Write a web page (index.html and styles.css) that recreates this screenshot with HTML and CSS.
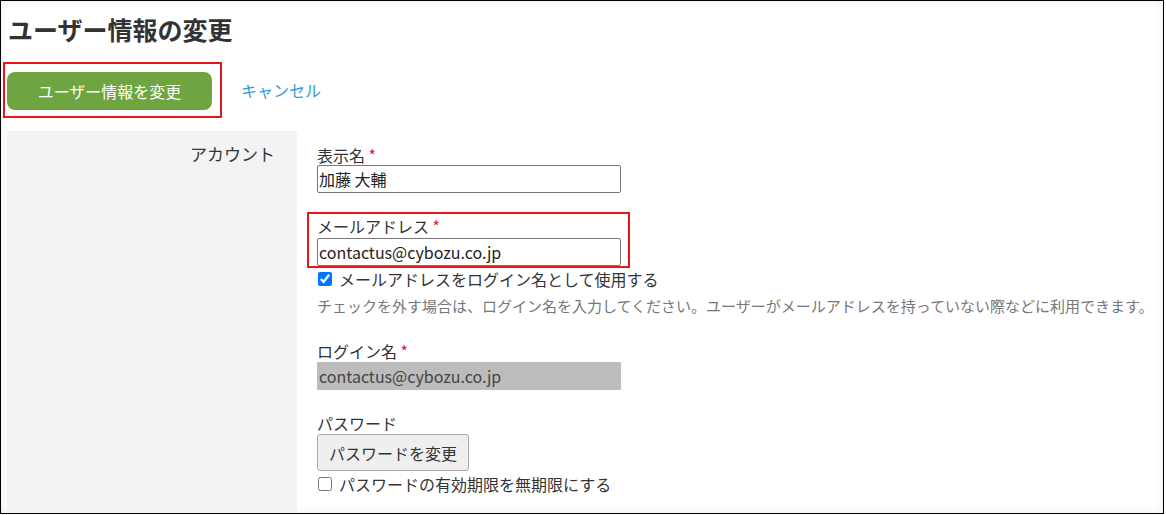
FILE: index.html
```html
<!DOCTYPE html>
<html lang="ja">
<head>
    <meta charset="UTF-8">
    <meta name="viewport" content="width=device-width, initial-scale=1.0">
    <title>ユーザー情報の変更</title>
    <link rel="stylesheet" href="styles.css">
</head>
<body>
<div class="frame">
    <h1 class="page-title">ユーザー情報の変更</h1>

    <div class="actions">
        <div class="highlight highlight-submit">
            <button class="btn-primary" type="button">ユーザー情報を変更</button>
        </div>
        <a class="cancel-link" href="#">キャンセル</a>
    </div>

    <div class="settings">
        <div class="settings-label">アカウント</div>
        <div class="settings-body">
            <div class="field">
                <label class="field-label">表示名 <span class="required">*</span></label>
                <input class="text-input" type="text" value="加藤 大輔">
            </div>

            <div class="highlight highlight-field">
                <label class="field-label">メールアドレス <span class="required">*</span></label>
                <input class="text-input" type="text" value="contactus@cybozu.co.jp">
            </div>

            <label class="check-row">
                <input type="checkbox" checked>
                <span>メールアドレスをログイン名として使用する</span>
            </label>
            <p class="help">チェックを外す場合は、ログイン名を入力してください。ユーザーがメールアドレスを持っていない際などに利用できます。</p>

            <div class="field field-login">
                <label class="field-label">ログイン名 <span class="required">*</span></label>
                <div class="readonly-box">contactus@cybozu.co.jp</div>
            </div>

            <div class="field field-password">
                <label class="field-label">パスワード</label>
                <button class="btn-secondary" type="button">パスワードを変更</button>
            </div>

            <label class="check-row check-row-last">
                <input type="checkbox">
                <span>パスワードの有効期限を無期限にする</span>
            </label>
        </div>
    </div>
</div>
</body>
</html>
```

FILE: styles.css
```css
* {
    box-sizing: border-box;
}

body {
    margin: 0;
    font-family: "Noto Sans CJK JP", "Noto Sans", sans-serif;
    font-size: 16px;
    color: #333;
    background: #fff;
}

.frame {
    width: 1164px;
    height: 514px;
    border: 1px solid #000;
    padding: 10px 0 0 6px;
    overflow: hidden;
    display: flex;
    flex-direction: column;
    box-shadow: inset 0 0 8px rgba(0, 0, 0, 0.08);
}

.page-title {
    margin: 0 0 15px 1px;
    font-size: 25px;
    line-height: 36px;
    font-weight: bold;
    color: #333;
}

.actions {
    display: flex;
    align-items: center;
}

.highlight {
    border: 2px solid #e8161b;
}

.highlight-submit {
    margin-left: -4px;
    padding: 8px 8px 6px 2px;
}

.btn-primary {
    width: 205px;
    height: 38px;
    border: none;
    border-radius: 8px;
    background-color: #6ea540;
    color: #fff;
    font-family: inherit;
    font-size: 16px;
    font-weight: normal;
    cursor: pointer;
}

.cancel-link {
    margin-left: 19px;
    color: #3498db;
    text-decoration: none;
    font-size: 16px;
}

.settings {
    flex: 1;
    margin-top: 13px;
    display: flex;
}

.settings-label {
    width: 290px;
    background-color: #f3f3f3;
    padding: 13px 22px 0 0;
    text-align: right;
    font-size: 17px;
    line-height: 20px;
}

.settings-body {
    padding: 14px 0 0 20px;
    display: flex;
    flex-direction: column;
    align-items: flex-start;
}

.field {
    display: flex;
    flex-direction: column;
    align-items: flex-start;
}

.field-label {
    line-height: 20px;
    color: #333;
}

.required {
    color: #e8161b;
}

.text-input {
    width: 304px;
    height: 28px;
    margin: 0;
    padding: 0 1px;
    border: 1px solid #767676;
    border-radius: 2px;
    font-family: inherit;
    font-size: 16px;
    color: #222;
}

.highlight-field {
    margin: 19px 0 0 -10px;
    padding: 2px 7px 0 8px;
    display: flex;
    flex-direction: column;
    align-items: flex-start;
}

.highlight-field .field-label {
    margin-bottom: 2px;
}

.check-row {
    display: flex;
    align-items: center;
    line-height: 20px;
    margin-top: 1px;
}

.check-row input {
    width: 14px;
    height: 14px;
    margin: 0 7px 0 1px;
}

.help {
    margin: 7px 0 0;
    font-size: 15px;
    line-height: 20px;
    color: #777;
    white-space: nowrap;
}

.field-login {
    margin-top: 25px;
}

.readonly-box {
    width: 304px;
    height: 28px;
    margin-top: 1px;
    padding: 0 2px;
    background-color: #bcbcbc;
    line-height: 28px;
    color: #444;
}

.field-password {
    margin-top: 23px;
}

.btn-secondary {
    margin-top: 1px;
    height: 37px;
    padding: 0 11px;
    border: 1px solid #aaa;
    border-radius: 3px;
    background-color: #efefef;
    color: #333;
    font-family: inherit;
    font-size: 16px;
}

.check-row-last {
    margin-top: 3px;
}
```
